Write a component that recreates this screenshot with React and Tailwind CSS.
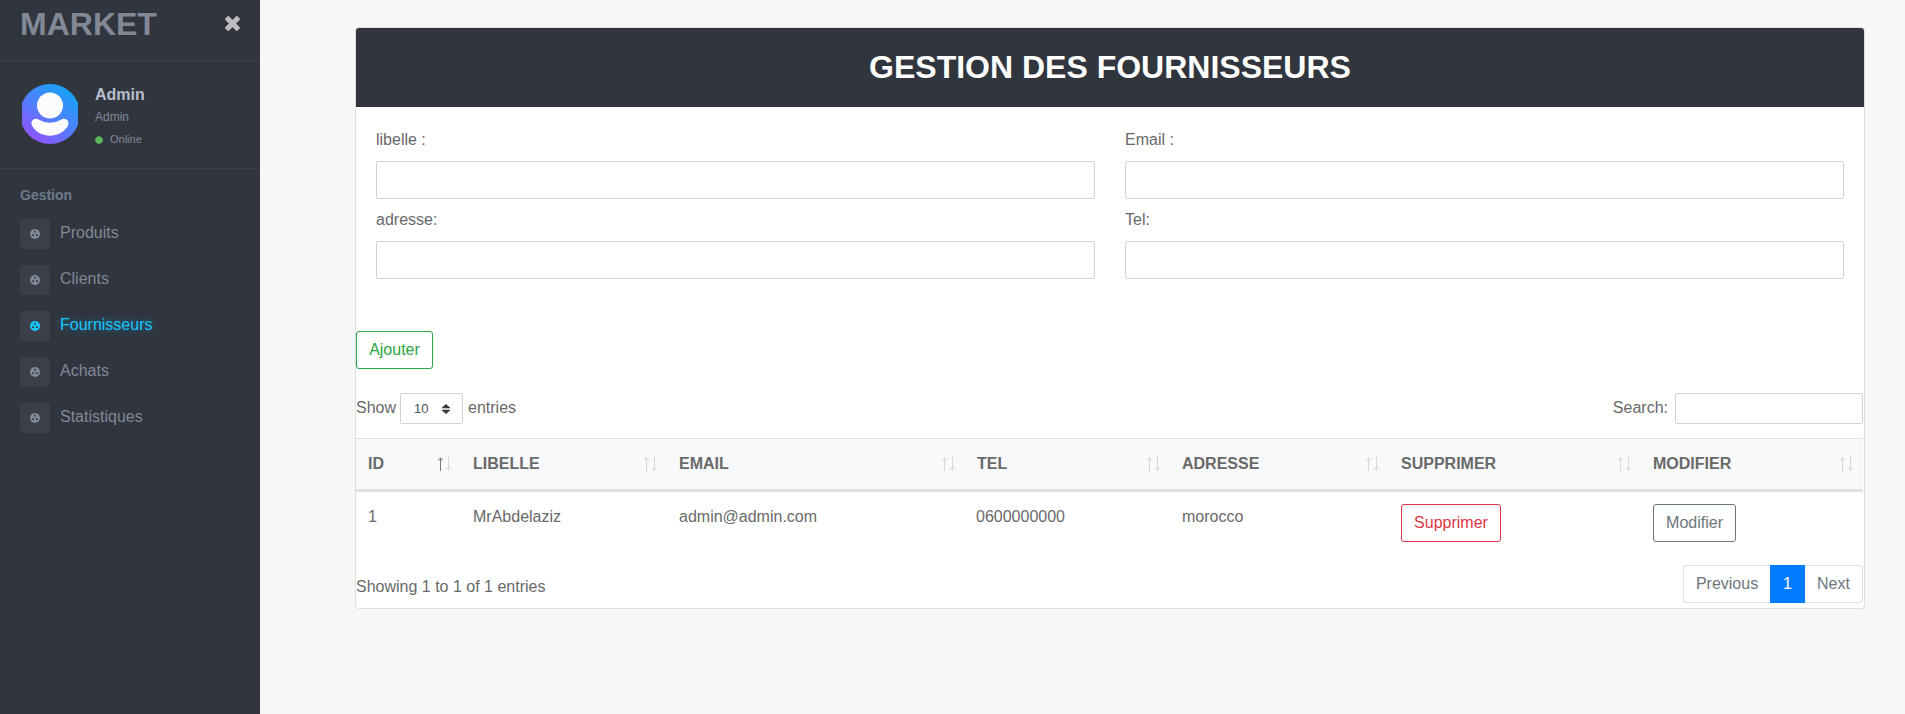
import { FaCircle } from "react-icons/fa";

const NAV = ["Produits", "Clients", "Fournisseurs", "Achats", "Statistiques"];

const COLUMNS = [
  { name: "ID", width: "w-[105px]" },
  { name: "LIBELLE", width: "w-[206px]" },
  { name: "EMAIL", width: "w-[298px]" },
  { name: "TEL", width: "w-[205px]" },
  { name: "ADRESSE", width: "w-[219px]" },
  { name: "SUPPRIMER", width: "w-[252px]" },
  { name: "MODIFIER", width: "w-[222px]" },
];

function CloseGlyph() {
  return (
    <svg viewBox="0 0 15 15" className="mt-4 size-[15px]" fill="#bdbdbd" stroke="#bdbdbd" strokeWidth="1.800" strokeLinejoin="round">
      <path d="M3.200 0.900L7.500 5.200L11.800 0.900L14.100 3.200L9.800 7.500L14.100 11.800L11.800 14.100L7.500 9.800L3.200 14.100L0.900 11.800L5.200 7.500L0.900 3.200Z" />
    </svg>
  );
}

function NavGlyph() {
  return (
    <svg viewBox="0 0 10 10" className="size-[10px]">
      <circle cx="5" cy="5" r="5" fill="currentColor" />
      <circle cx="5" cy="2.7" r="1" fill="#3a3f48" />
      <rect x="2" y="5.200" width="2.100" height="1.800" rx="0.400" fill="#3a3f48" />
      <rect x="5.900" y="5.200" width="2.100" height="1.800" rx="0.400" fill="#3a3f48" />
    </svg>
  );
}

function Avatar() {
  return (
    <svg viewBox="0 0 56 60" className="h-[60px] w-[56px]">
      <defs>
        <linearGradient id="avatar" x1="0.15" y1="1" x2="0.85" y2="0">
          <stop offset="0" stopColor="#9c4dff" />
          <stop offset="0.5" stopColor="#4f80ff" />
          <stop offset="1" stopColor="#0ba8f5" />
        </linearGradient>
      </defs>
      <circle cx="28" cy="30" r="30" fill="url(#avatar)" />
      <circle cx="28" cy="21.5" r="13" fill="#fcfcff" />
      <path d="M16 35.2 Q28 42.5 40 35.2 C44 33.6 48 37 46 41.500 C42.500 48.500 35 51.700 28 51.700 C21 51.700 13.500 48.500 10 41.500 C8 37 12 33.600 16 35.200Z" fill="#fcfcff" />
    </svg>
  );
}

function SortArrows({ active }) {
  return (
    <svg viewBox="0 0 15 14" className="h-[14px] w-[15px]" fill="none" stroke="#696969">
      <g opacity={active ? 0.9 : 0.25}>
        <path d="M3.500 1V14" strokeWidth="1" />
        <path d="M1 3.300L3.500 1.200L6 3.300" strokeWidth="1" />
      </g>
      <g opacity="0.25">
        <path d="M11.500 0V13" strokeWidth="1" />
        <path d="M9 10.700L11.500 12.800L14 10.700" strokeWidth="1" />
      </g>
    </svg>
  );
}

function Field({ label }) {
  return (
    <label className="flex flex-col gap-[9px]">
      <span className="h-[25px] leading-[26px]">{label}</span>
      <input className="h-[38px] w-full rounded-[2px] border border-[#ced4da] bg-white px-3" />
    </label>
  );
}

export default function App() {
  return (
    <div className="flex h-[714px] w-full overflow-hidden bg-[#f7f7f7] font-['Liberation_Sans',Arial,sans-serif] text-base leading-6 text-[#696969]">
      <aside className="flex h-full w-[260px] shrink-0 flex-col bg-[#31353d] text-[#818896]">
        <div className="flex h-[62px] items-start justify-between border-b border-[#3a3f48] pr-5 pl-5">
          <span className="pt-1 text-[32px] leading-[40px] font-bold">MARKET</span>
          <CloseGlyph />
        </div>
        <div className="flex h-[107px] gap-[17px] border-b border-[#3a3f48] pt-[22px] pl-[22px]">
          <Avatar />
          <div className="flex flex-col">
            <span className="h-6 font-bold leading-[21px] text-[#b8bfce]">Admin</span>
            <span className="h-[21px] text-xs leading-[18px]">Admin</span>
            <span className="flex items-center gap-[7px] text-[11px] leading-[21px]">
              <FaCircle className="size-2 text-[#5cb85c]" />
              Online
            </span>
          </div>
        </div>
        <div className="px-5 pt-[15px]">
          <div className="h-[35px] text-sm leading-[22px] font-bold text-[#6c7b88]">Gestion</div>
          <nav className="flex flex-col gap-4">
            {NAV.map((item) => (
              <a
                key={item}
                className={
                  item === "Fournisseurs"
                    ? "flex h-[30px] items-center gap-[10px] text-[#16c7ff] [text-shadow:0_0_10px_rgba(22,199,255,0.5)]"
                    : "flex h-[30px] items-center gap-[10px]"
                }
              >
                <span className="flex size-[30px] items-center justify-center rounded-[4px] bg-[#3a3f48]">
                  <NavGlyph />
                </span>
                <span className="-mt-[3px]">{item}</span>
              </a>
            ))}
          </nav>
        </div>
      </aside>

      <main className="pt-[27px] pl-[95px]">
        <section className="h-[582px] w-[1510px] rounded-[4px] border border-[#dfdfdf] bg-white">
          <header className="flex h-[79px] items-center justify-center rounded-t-[3px] border-b border-[#2b2f36] bg-[#31353d]">
            <h1 className="-mt-px text-[32px] leading-[38px] font-bold text-white">GESTION DES FOURNISSEURS</h1>
          </header>
          <div className="grid grid-cols-2 gap-x-[30px] gap-y-2 px-5 pt-5">
            <Field label="libelle :" />
            <Field label="Email :" />
            <Field label="adresse:" />
            <Field label="Tel:" />
          </div>
          <button className="mt-[52px] block h-[38px] w-[77px] rounded-[3px] border border-[#28a745] text-[#28a745]">
            Ajouter
          </button>
          <div className="mt-6 flex h-[31px] justify-between pr-px">
            <div className="flex">
              <span className="w-11 leading-[29px]">Show</span>
              <span className="flex w-[63px] items-center justify-between rounded-[2px] border border-[#ced4da] pr-3 pl-[13px] text-[13px] text-[#495057]">
                10
                <svg viewBox="0 0 8 10" className="h-[10px] w-2" fill="#343a40">
                  <path d="M4 0L8 3.600V4.200H0V3.600ZM4 10L8 6.400V5.800H0V6.400Z" />
                </svg>
              </span>
              <span className="pl-[5px] leading-[29px]">entries</span>
            </div>
            <label className="flex gap-[7px]">
              <span className="leading-[29px]">Search:</span>
              <input className="h-[31px] w-[188px] rounded-[2px] border border-[#ced4da] px-2" />
            </label>
          </div>
          <table className="mt-[14px] w-[1507px] table-fixed border-separate border-spacing-0">
            <thead>
              <tr className="h-[54px] bg-[#f8f9fb]">
                {COLUMNS.map((col, i) => (
                  <th key={col.name} className={"h-[54px] border-t border-b-3 border-[#dee2e6] p-0 text-left font-bold " + col.width}>
                    <div className="flex items-center justify-between pr-[9px] pl-3">
                      <span className="-mt-px">{col.name}</span>
                      <SortArrows active={i === 0} />
                    </div>
                  </th>
                ))}
              </tr>
            </thead>
            <tbody>
              <tr className="align-top">
                <td className="pt-[13px] pl-3">1</td>
                <td className="pt-[13px] pl-3">MrAbdelaziz</td>
                <td className="pt-[13px] pl-3">admin@admin.com</td>
                <td className="pt-[13px] pl-[11px]">0600000000</td>
                <td className="pt-[13px] pl-3">morocco</td>
                <td className="pt-3 pl-3">
                  <button className="block h-[38px] w-[100px] rounded-[3px] border border-[#dc3545] text-[#dc3545]">Supprimer</button>
                </td>
                <td className="pt-3 pl-3">
                  <button className="block h-[38px] w-[83px] rounded-[3px] border border-[#6c757d] text-[#6c757d]">Modifier</button>
                </td>
              </tr>
            </tbody>
          </table>
          <div className="mt-[23px] flex h-[38px] justify-between pr-px">
            <span className="pt-[10px]">Showing 1 to 1 of 1 entries</span>
            <div className="flex text-[#6c757d]">
              <span className="flex w-[87px] items-center justify-center rounded-l-[4px] border border-r-0 border-[#dee2e6]">Previous</span>
              <span className="flex w-[35px] items-center justify-center bg-[#007bff] text-white">1</span>
              <span className="flex w-[58px] items-center justify-center rounded-r-[4px] border border-l-0 border-[#dee2e6]">Next</span>
            </div>
          </div>
        </section>
      </main>
    </div>
  );
}
